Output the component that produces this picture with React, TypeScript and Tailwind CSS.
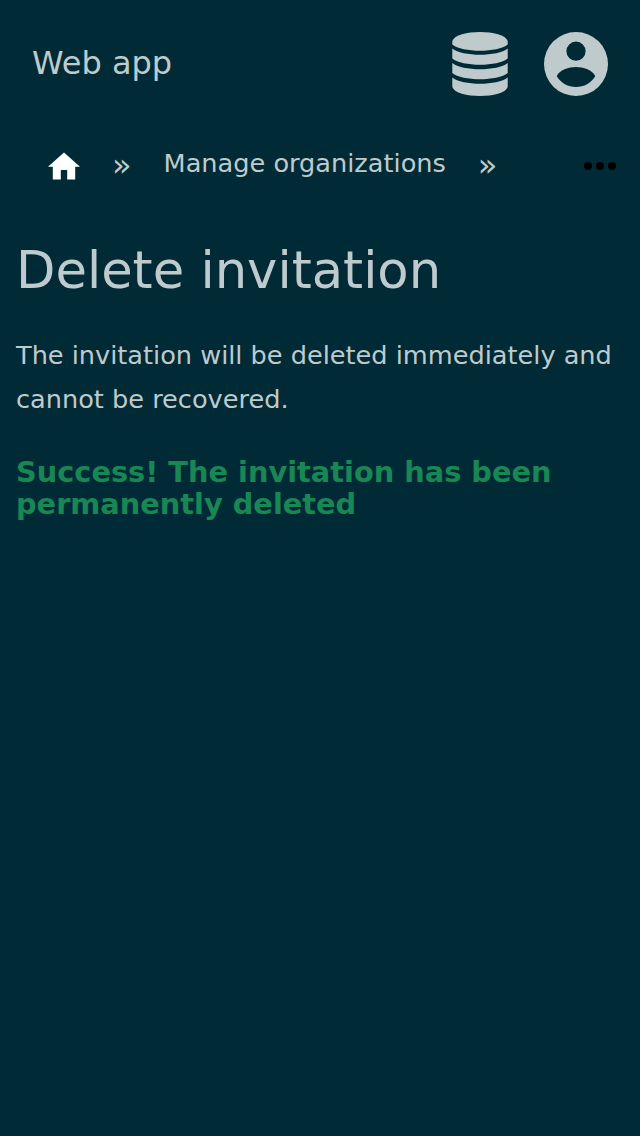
export default function App() {
  return (
    <div className="min-h-screen bg-[#002b36] text-[#bfcacd] font-['DejaVu_Sans',sans-serif]">
      <header className="flex h-32 items-center justify-between px-8">
        <span className="-mt-0.5 text-[32px] leading-10">Web app</span>
        <div className="flex items-center gap-8">
          <svg className="h-16 w-16" viewBox="0 0 64 64" fill="currentColor">
            <path d="M4.3 9C8 -3 56 -3 59.7 9V12.5C50 20.8 14 20.8 4.3 12.5Z" />
            <path d="M4.3 16.5C14 24.8 50 24.8 59.7 16.5V26.5C50 34.8 14 34.8 4.3 26.5Z" />
            <path d="M4.3 31C14 39.3 50 39.3 59.7 31V41C50 49.3 14 49.3 4.3 41Z" />
            <path d="M4.3 45.5C14 53.8 50 53.8 59.7 45.5V55C56 67 8 67 4.3 55Z" />
          </svg>
          <svg className="h-16 w-16" viewBox="0 0 64 64" fill="currentColor" fillRule="evenodd">
            <path d="M32 0a32 32 0 1 0 0 64a32 32 0 1 0 0-64zM32 9.6a9.6 9.6 0 1 1 0 19.2a9.6 9.6 0 1 1 0-19.2zM12.8 44.2C15 38 25 35 32 35S49 38 51.2 44.2C47 51 40 55 32 55S17 51 12.8 44.2z" />
          </svg>
        </div>
      </header>
      <nav className="flex h-[76px] items-center pl-12 pr-6 text-[25.6px]">
        <svg className="h-8 w-8" viewBox="0 0 32 32" fill="#fff">
          <path d="M16 2.4L0 16.8H4.8V29.6H12.8V20H19.2V29.6H27.2V16.8H32Z" />
        </svg>
        <span className="ml-8 -mt-0.5 text-[32px] leading-8">»</span>
        <span className="ml-8 -mt-1.5">Manage organizations</span>
        <span className="ml-8 -mt-0.5 text-[32px] leading-8">»</span>
        <svg className="ml-auto h-8 w-8" viewBox="0 0 32 32">
          <g fill="black">
            <circle cx="4" cy="16" r="4" />
            <circle cx="16" cy="16" r="4" />
            <circle cx="28" cy="16" r="4" />
          </g>
        </svg>
      </nav>
      <main className="px-4">
        <h1 className="mt-9 text-[51.2px] leading-[60px]">Delete invitation</h1>
        <p className="mt-[33px] text-[25.6px] leading-[44px]">The invitation will be deleted immediately and cannot be recovered.</p>
        <p className="mt-[35px] text-[28.8px] font-bold leading-8 text-[#198754]">Success! The invitation has been permanently deleted</p>
      </main>
    </div>
  );
}
